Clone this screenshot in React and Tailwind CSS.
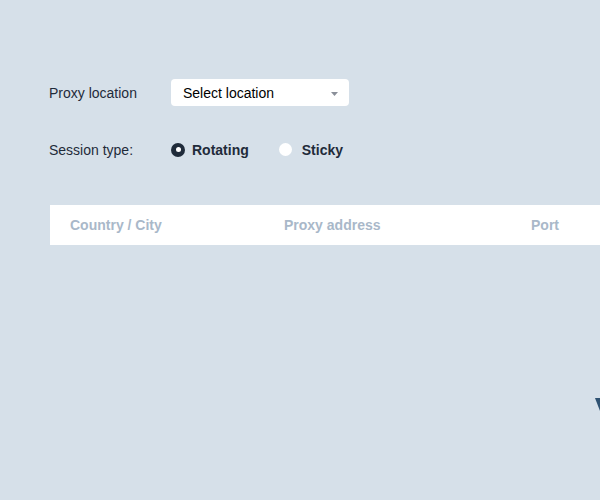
const Radio = ({ label, checked }) => (
  <label className={`flex items-center text-[14px] font-bold text-[#1f2b3a] ${checked ? "gap-[7px]" : "gap-[10px]"}`}>
    {checked ? (
      <span className="w-[14px] h-[14px] rounded-full bg-[#1f2b3a] flex items-center justify-center">
        <span className="w-[5px] h-[5px] rounded-full bg-white" />
      </span>
    ) : (
      <span className="w-[13px] h-[13px] rounded-full bg-white" />
    )}
    <span className="pt-[2px]">{label}</span>
  </label>
);

export default function App() {
  return (
    <div className="relative w-[600px] h-[500px] overflow-hidden bg-[#d6e0e9] font-['Liberation_Sans',Arial,sans-serif]">
      <div className="pt-[79px] pl-[49px]">
        <div className="flex items-center h-[27px]">
          <span className="w-[122px] pt-[1px] text-[14px] text-[#1f2b3a]">Proxy location</span>
          <button className="w-[178px] h-[27px] bg-white rounded-[4px] flex items-center justify-between pl-[12px] pr-[11px] pt-[2px] text-[14px] text-black">
            <span>Select location</span>
            <svg width="7" height="4" viewBox="0 0 7 4">
              <path d="M0 0h7L3.5 4z" fill="#8a8f99" />
            </svg>
          </button>
        </div>
        <div className="flex items-center mt-[30px] h-[27px]">
          <span className="w-[122px] pt-[2px] text-[14px] text-[#1f2b3a]">Session type:</span>
          <div className="flex items-center gap-[30px]">
            <Radio label="Rotating" checked />
            <Radio label="Sticky" />
          </div>
        </div>
        <div className="mt-[42px] ml-[1px] h-[40px] bg-white flex items-center text-[14px] font-bold text-[#a9b8c9]">
          <div className="w-[214px] pl-[20px]">Country / City</div>
          <div className="w-[247px] pl-[20px]">Proxy address</div>
          <div className="pl-[20px]">Port</div>
        </div>
      </div>
      <svg className="absolute left-[595px] top-[398px]" width="5" height="13" viewBox="0 0 5 13">
        <path d="M0 0 L5 0 L5 13 Z" fill="#2f5272" />
      </svg>
    </div>
  );
}
